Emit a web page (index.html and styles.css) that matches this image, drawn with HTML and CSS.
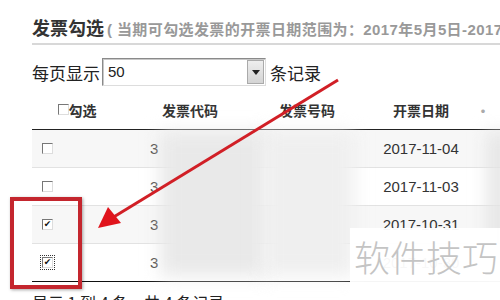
FILE: index.html
```html
<!DOCTYPE html>
<html>
<head>
<meta charset="utf-8">
<link rel="stylesheet" href="styles.css">
</head>
<body>
<div class="page">
  <div class="title-bar">
    <span class="title">发票勾选</span><span class="sub">( 当期可勾选发票的开票日期范围为：2017年5月5日-2017年11月30日 )</span>
  </div>
  <div class="pager">
    <span>每页显示</span>
    <div class="select"><span class="val">50</span><span class="btn"><svg width="8" height="5" viewBox="0 0 8 5"><path d="M0 0H8L4 5Z" fill="#222"/></svg></span></div>
    <span>条记录</span>
  </div>
  <div class="table">
    <div class="row head">
      <div class="c1"><span class="cb"></span>勾选</div>
      <div class="c2">发票代码</div>
      <div class="c3">发票号码</div>
      <div class="c4">开票日期</div>
      <div class="c5">·</div>
    </div>
    <div class="row odd">
      <div class="c1"><span class="cb"></span></div>
      <div class="c2 code">3</div>
      <div class="c3"></div>
      <div class="c4">2017-11-04</div>
      <div class="c5"></div>
    </div>
    <div class="row">
      <div class="c1"><span class="cb"></span></div>
      <div class="c2 code">3</div>
      <div class="c3"></div>
      <div class="c4">2017-11-03</div>
      <div class="c5"></div>
    </div>
    <div class="row odd">
      <div class="c1"><span class="cb on">✔</span></div>
      <div class="c2 code">3</div>
      <div class="c3"></div>
      <div class="c4">2017-10-31</div>
      <div class="c5"></div>
    </div>
    <div class="row last">
      <div class="c1"><span class="cb on focus">✔</span></div>
      <div class="c2 code">3</div>
      <div class="c3"></div>
      <div class="c4">2017-10-30</div>
      <div class="c5"></div>
    </div>
    <div class="blur b1"></div>
    <div class="blur b2"></div>
    <div class="blur b3"></div>
  </div>
  <div class="footer">显示 1 到 4 条，共 4 条记录</div>
</div>
<div class="redbox"></div>
<svg class="arrow" width="500" height="300" viewBox="0 0 500 300">
  <line x1="338" y1="80" x2="112" y2="218" stroke="#d11f26" stroke-width="3"/>
  <path d="M98 228 L108 207 L121 223 Z" fill="#e0141c"/>
</svg>
<div class="watermark">软件技巧</div>
</body>
</html>
```
FILE: styles.css
```css
html, body {
  margin: 0;
  padding: 0;
  width: 500px;
  height: 300px;
  overflow: hidden;
  background: #fff;
  font-family: "Noto Sans CJK SC", "Liberation Sans", sans-serif;
  color: #222;
}
.page {
  position: relative;
  height: 300px;
  overflow: hidden;
  box-sizing: border-box;
  padding: 14px 0 0 32px;
}
.title-bar {
  white-space: nowrap;
  overflow: hidden;
  height: 29px;
  border-bottom: 2px solid #d8d8d8;
  line-height: 26px;
}
.title {
  font-size: 18px;
  font-weight: bold;
  color: #333;
}
.sub {
  font-family: "Liberation Sans", "Noto Sans CJK SC", sans-serif;
  font-size: 15px;
  font-weight: bold;
  color: #999;
  margin-left: 3px;
  letter-spacing: 0.4px;
}
.pager {
  display: flex;
  align-items: center;
  margin-top: 12px;
  height: 30px;
  font-size: 17px;
  color: #222;
}
.select {
  display: flex;
  width: 162px;
  height: 26px;
  margin: 0 4px 0 2px;
  border: 1px solid #8a8a8a;
  border-right-color: #ddd;
  border-bottom-color: #ddd;
  box-shadow: inset 1px 1px 0 #c8c8c8;
  background: #fff;
}
.val {
  flex: 1;
  font-size: 15px;
  line-height: 26px;
  padding-left: 5px;
  font-family: "Liberation Sans", sans-serif;
}
.btn {
  width: 15px;
  margin: 1px;
  background: linear-gradient(#eee, #d4d4d4);
  border: 1px solid #aaa;
  display: flex;
  align-items: center;
  justify-content: center;
}
.table {
  position: relative;
  margin-top: 3px;
  width: 468px;
}
.row {
  display: grid;
  grid-template-columns: 110px 96px 138px 90px 34px;
  height: 37px;
  align-items: center;
  border-bottom: 1px solid #e2e2e2;
  font-size: 14px;
}
.row.odd {
  background: #f7f7f7;
}
.row.head {
  height: 39px;
  border-bottom: 1px solid #222;
  font-weight: bold;
  color: #333;
}
.row.last {
  border-bottom: 1px solid #111;
}
.head > div {
  text-align: center;
}
.head .c1 {
  display: flex;
  align-items: center;
  justify-content: center;
  padding-right: 20px;
}
.c1 .cb {
  display: inline-block;
  width: 9px;
  height: 9px;
  border: 1px solid #777;
  border-right-color: #ddd;
  border-bottom-color: #ddd;
  background: #fff;
  box-sizing: content-box;
}
.row:not(.head) .c1 {
  padding-left: 10px;
  display: flex;
  align-items: center;
}
.cb.on {
  font-size: 9px;
  line-height: 9px;
  text-align: center;
  color: #111;
  font-family: "DejaVu Sans", sans-serif;
}
.cb.focus {
  outline: 1px dotted #333;
  outline-offset: 1px;
}
.code {
  padding-left: 8px;
  font-size: 15px;
  font-family: "Liberation Sans", sans-serif;
  color: #333;
}
.row:not(.head) .c4 {
  text-align: center;
  font-size: 15px;
  font-family: "Liberation Sans", sans-serif;
  color: #333;
}
.c5 {
  color: #aaa;
}
.blur {
  position: absolute;
  top: 42px;
  height: 144px;
  filter: blur(9px);
}
.b1 { left: 128px; width: 108px; background: #e9e9e9; }
.b2 { left: 230px; width: 92px; background: #efefef; }
.b3 { left: 456px; width: 20px; background: #e4e4e4; }
.footer {
  margin-top: 8px;
  font-size: 16px;
  color: #222;
}
.redbox {
  position: absolute;
  left: 10px;
  top: 197px;
  width: 64px;
  height: 84px;
  border: 4px solid #c4262e;
  box-shadow: 1px 1px 3px rgba(0,0,0,0.35);
}
.arrow {
  position: absolute;
  left: 0;
  top: 0;
}
.watermark {
  position: absolute;
  left: 350px;
  top: 228px;
  width: 150px;
  height: 72px;
  background: rgba(255,255,255,0.96);
  font-size: 36px;
  color: #c4c4c4;
  white-space: nowrap;
  padding: 8px 0 0 4px;
  box-sizing: border-box;
  font-weight: 300;
  line-height: 40px;
}
```
